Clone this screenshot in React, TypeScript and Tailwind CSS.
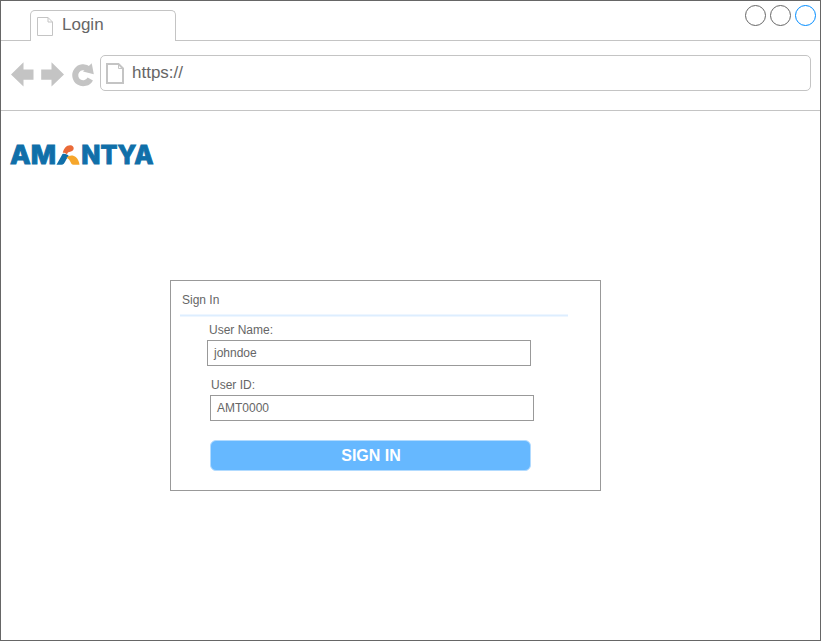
import React from "react";

function PageIcon({ width, height, stroke, className }: { width: number; height: number; stroke: number; className?: string }) {
  const i = stroke / 2;
  const fold = 4.5;
  return (
    <svg width={width} height={height} className={className} fill="none" stroke="#c4c4c4" strokeWidth={stroke}>
      <path d={`M${i} ${i}H${width - fold - i}L${width - i} ${fold + i}V${height - i}H${i}Z`} />
      <path d={`M${width - fold - i} ${i}V${fold + i}H${width - i}`} strokeWidth={1} />
    </svg>
  );
}

function TabStrip() {
  return (
    <div className="flex h-10 shrink-0">
      <div className="w-[29px] border-b border-[#c4c4c4]" />
      <div className="mt-[9px] flex w-[146px] rounded-t-[5px] border border-b-0 border-[#c4c4c4]">
        <PageIcon width={16} height={19} stroke={1} className="ml-[6px] mt-[6px]" />
        <span className="ml-[9px] mt-[4px] text-[17px] leading-[20px]">Login</span>
      </div>
      <div className="flex flex-1 justify-end gap-[4px] border-b border-[#c4c4c4] pr-[4px] pt-[4px]">
        <span className="h-[21px] w-[21px] rounded-full border border-[#666666]" />
        <span className="h-[21px] w-[21px] rounded-full border border-[#666666]" />
        <span className="h-[21px] w-[21px] rounded-full border border-[#008cff]" />
      </div>
    </div>
  );
}

function NavBar() {
  return (
    <div className="flex h-[70px] shrink-0 border-b border-[#c4c4c4] pt-[14px]">
      <svg width="99" height="38" viewBox="1 55 99 38" fill="#c4c4c4">
        <path d="M11 74.5L23.5 62.3V69.5H33.5V79.7H23.5V86.5Z" />
        <path d="M64 74.5L51.5 62.3V69.5H41.2V79.7H51.5V86.5Z" />
        <path d="M88.5 69.2A8 8 0 1 0 90.3 79" fill="none" stroke="#c4c4c4" strokeWidth="6" />
        <path d="M91.7 63.3L93.8 74.2L83 71.6Z" />
      </svg>
      <div className="flex h-[36px] w-[711px] rounded-[5px] border border-[#c4c4c4]">
        <PageIcon width={18} height={21} stroke={2} className="ml-[5px] mt-[7px]" />
        <span className="ml-[8px] mt-[7px] text-[17px] leading-[20px]">https://</span>
      </div>
    </div>
  );
}

function Logo() {
  return (
    <svg width="160" height="50" viewBox="3 130 160 50" className="ml-[2px] mt-[19px] shrink-0" fill="#106fa9">
      <g fontFamily="Inter, sans-serif" fontWeight="800" fontSize="26" stroke="#106fa9" strokeWidth="0.9">
        <text x="10" y="164.3" textLength="46" lengthAdjust="spacingAndGlyphs">AM</text>
        <text x="81.3" y="164.3" textLength="72.3" lengthAdjust="spacingAndGlyphs">NTYA</text>
      </g>
      <path d="M56.5 164.7L62.5 154C65 153.5 68 154.5 69 156.5C65.5 158 65.5 164.7 61.5 164.7Z" />
      <path d="M62.8 153C63.5 148.5 66.5 145 70.5 145.2C74.5 145.7 74.5 149.8 72 151C69 152.3 68 151.5 67 154.5C65.5 153 64 152.6 62.8 153Z" fill="#ea6a38" />
      <path d="M66.5 157.8C69 154.6 73.5 154.8 76 157.3C78 159.3 79.3 162 79.5 164.7H73.5C70 164.7 71.5 160.2 66.5 157.8Z" fill="#f6a62b" />
    </svg>
  );
}

function SignInForm() {
  return (
    <div className="ml-[169px] mt-[100px] flex h-[211px] w-[431px] shrink-0 flex-col border border-[#999999] text-[12px] leading-[14px]">
      <h1 className="ml-[11px] mt-[12px]">Sign In</h1>
      <svg width="388" height="3" className="ml-[9px] mt-[7px]">
        <path d="M0 1.5H388" stroke="#ddeeff" strokeWidth="2" />
      </svg>
      <label className="ml-[38px] mt-[6px]">User Name:</label>
      <div className="ml-[36px] mt-[3px] h-[26px] w-[324px] border border-[#999999] pl-[6px] pt-[5px]">johndoe</div>
      <label className="ml-[40px] mt-[12px]">User ID:</label>
      <div className="ml-[39px] mt-[3px] h-[26px] w-[324px] border border-[#999999] pl-[6px] pt-[5px]">AMT0000</div>
      <button className="ml-[39px] mt-[19px] h-[31px] w-[321px] rounded-[6px] border border-[#b2dbff] bg-[#66b8ff] pl-px text-[16px] leading-[29px] font-bold text-white">
        SIGN IN
      </button>
    </div>
  );
}

export default function App() {
  return (
    <div className="flex h-[641px] w-[821px] flex-col border border-[#666666] bg-white font-['Liberation_Sans',Arial,sans-serif] text-[#666666]">
      <TabStrip />
      <NavBar />
      <Logo />
      <SignInForm />
    </div>
  );
}
